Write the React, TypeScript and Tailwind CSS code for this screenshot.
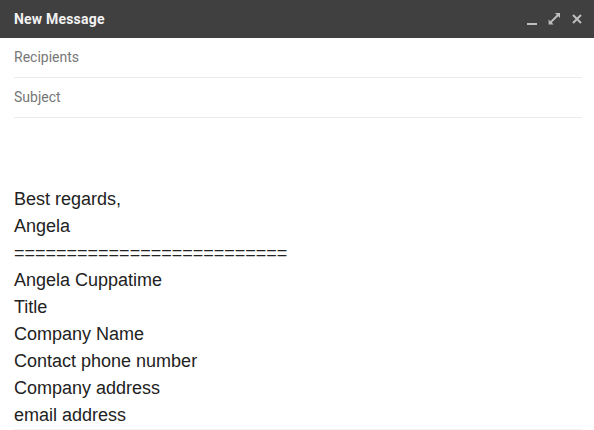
const signature = [
  "Best regards,",
  "Angela",
  "==========================",
  "Angela Cuppatime",
  "Title",
  "Company Name",
  "Contact phone number",
  "Company address",
  "email address",
];

export default function App() {
  return (
    <div className="w-[594px] h-[430px] bg-white overflow-hidden flex flex-col">
      {/* title bar */}
      <div className="h-[38px] bg-[#404040] flex items-center justify-between pl-[14px] pr-[10px] shrink-0">
        <span className="text-[14px] font-bold text-[#f2f2f2] font-['Roboto',sans-serif] tracking-[0.2px]">New Message</span>
        <div className="flex items-center gap-[9px] text-[#bdbdbd]">
          <svg width="14" height="14" viewBox="0 0 14 14" className="mt-[1px] -mr-[2px]">
            <rect x="1" y="10" width="10" height="2" fill="currentColor" />
          </svg>
          <svg width="14" height="14" viewBox="0 0 14 14">
            <path d="M8 1h5v5l-1.8-1.8-6.4 6.4L6.6 12.4H1.6V7.4l1.8 1.8 6.4-6.4z" fill="currentColor" />
          </svg>
          <svg width="14" height="14" viewBox="0 0 14 14">
            <path d="M3 3l8 8M11 3l-8 8" stroke="currentColor" strokeWidth="2" />
          </svg>
        </div>
      </div>

      <div className="ml-[14px] mr-[12px] font-['Roboto',sans-serif] text-[14px] text-[#777]">
        <div className="h-[40px] flex items-center border-b border-[#ebebeb]">Recipients</div>
        <div className="h-[40px] flex items-center border-b border-[#ebebeb]">Subject</div>
      </div>

      {/* body */}
      <div className="ml-[14px] mr-[12px] pt-[68px] font-['Liberation_Sans',Arial,sans-serif] text-[18px] leading-[27px] text-[#222] flex-1">
        {signature.map((line, i) => (
          <div key={i}>{line}</div>
        ))}
        <div className="h-px bg-[#f3f3f3]" />
      </div>
    </div>
  );
}
